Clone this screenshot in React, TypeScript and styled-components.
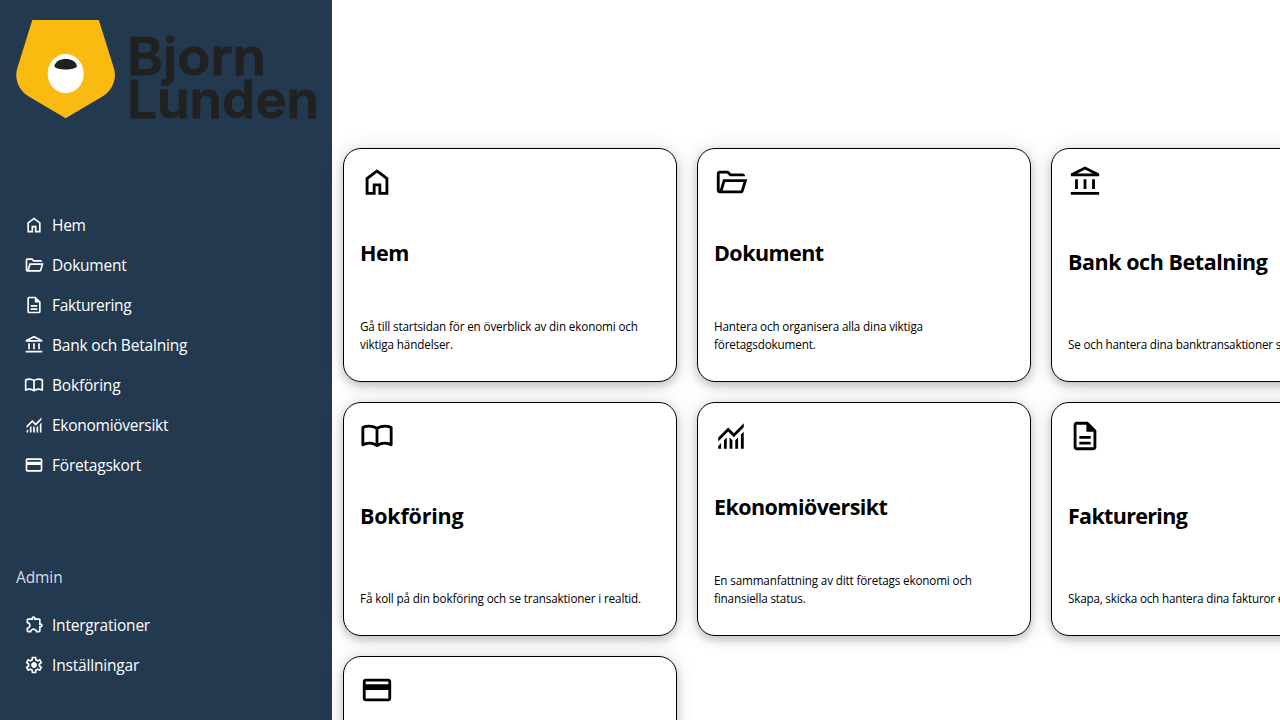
import React from 'react';
import styled, { createGlobalStyle } from 'styled-components';

const icons = {
  home: 'M240-200h120v-240h240v240h120v-360L480-740 240-560v360Zm-80 80v-480l320-240 320 240v480H520v-240h-80v240H160Zm320-350Z',
  folder:
    'M160-160q-33 0-56.5-23.5T80-240v-480q0-33 23.5-56.5T160-800h240l80 80h320q33 0 56.5 23.5T880-640H447l-80-80H160v480l96-320h684L837-217q-8 26-29.5 41.5T760-160H160Zm84-80h516l72-240H316l-72 240Zm0 0 72-240-72 240Zm-84-400v-80 80Z',
  document:
    'M320-240h320v-80H320v80Zm0-160h320v-80H320v80ZM240-80q-33 0-56.5-23.5T160-160v-640q0-33 23.5-56.5T240-880h320l240 240v480q0 33-23.5 56.5T720-80H240Zm280-520v-200H240v640h480v-440H520ZM240-800v200-200 640-640Z',
  bank: 'M200-280v-280h80v280h-80Zm240 0v-280h80v280h-80ZM80-120v-80h800v80H80Zm600-160v-280h80v280h-80ZM80-640v-80l400-200 400 200v80H80Zm178-80h444L480-830 258-720Z',
  book: 'M260-320q47 0 91.5 10.5T440-278v-394q-41-24-87-36t-93-12q-36 0-71.5 7T120-692v396q35-12 69.5-18t70.5-6Zm260 42q44-21 88.5-31.5T700-320q36 0 70.5 6t69.5 18v-396q-33-14-68.5-21t-71.5-7q-47 0-93 12t-87 36v394Zm-40 118q-48-38-104-59t-116-21q-42 0-82.5 11T100-198q-21 11-40.5-1T40-234v-482q0-11 5.5-21T62-752q46-24 96-36t102-12q58 0 113.5 15T480-740q51-30 106.5-45T700-800q52 0 102 12t96 36q11 5 16.5 15t5.5 21v482q0 23-19.5 35t-40.5 1q-37-20-77.5-31T700-240q-60 0-116 21t-104 59Z',
  chart:
    'M120-120v-80l80-80v160h-80Zm160 0v-240l80-80v320h-80Zm160 0v-320l80 81v239h-80Zm160 0v-239l80-80v319h-80Zm160 0v-400l80-80v480h-80ZM120-327v-113l280-280 160 160 280-280v113L560-447 400-607 120-327Z',
  card: 'M880-720v480q0 33-23.5 56.5T800-160H160q-33 0-56.5-23.5T80-240v-480q0-33 23.5-56.5T160-800h640q33 0 56.5 23.5T880-720Zm-720 80h640v-80H160v80Zm0 160v240h640v-240H160Zm0 240v-480 480Z',
  puzzle:
    'M352-120H200q-33 0-56.5-23.5T120-200v-152q48 0 84-30.5t36-77.5q0-47-36-77.5T120-568v-152q0-33 23.5-56.5T200-800h160q0-42 29-71t71-29q42 0 71 29t29 71h160q33 0 56.5 23.5T800-720v160q42 0 71 29t29 71q0 42-29 71t-71 29v160q0 33-23.5 56.5T720-120H568q0-50-31.5-85T460-240q-45 0-76.5 35T352-120Zm-152-80h85q24-66 77-93t98-27q45 0 98 27t77 93h85v-240h80q8 0 14-6t6-14q0-8-6-14t-14-6h-80v-240H480v-80q0-8-6-14t-14-6q-8 0-14 6t-6 14v80H200v88q54 20 87 67t33 105q0 57-33 104t-87 68v88Z',
  gear: 'm370-80-16-128q-13-5-24.5-12T307-235l-119 50L78-375l103-78q-1-7-1-13.5v-27q0-6.5 1-13.5L78-585l110-190 119 50q11-8 23-15t24-12l16-128h220l16 128q13 5 24.5 12t22.5 15l119-50 110 190-103 78q1 7 1 13.5v27q0 6.5-2 13.5l103 78-110 190-118-50q-11 8-23 15t-24 12L590-80H370Zm70-80h79l14-106q31-8 57.5-23.5T639-327l99 41 39-68-86-65q5-14 7-29.5t2-31.5q0-16-2-31.5t-7-29.5l86-65-39-68-99 42q-22-23-48.5-38.5T533-694l-13-106h-79l-14 106q-31 8-57.5 23.5T321-633l-99-41-39 68 86 64q-5 15-7 30t-2 32q0 16 2 31t7 30l-86 65 39 68 99-42q22 23 48.5 38.5T427-266l13 106Zm42-180q58 0 99-41t41-99q0-58-41-99t-99-41q-59 0-99.5 41T342-480q0 58 40.5 99t99.5 41Z',
};

type IconName = keyof typeof icons;

const mainLinks: { icon: IconName; label: string; track: number }[] = [
  { icon: 'home', label: 'Hem', track: -0.3 },
  { icon: 'folder', label: 'Dokument', track: -0.22 },
  { icon: 'document', label: 'Fakturering', track: -0.34 },
  { icon: 'bank', label: 'Bank och Betalning', track: -0.19 },
  { icon: 'book', label: 'Bokföring', track: -0.2 },
  { icon: 'chart', label: 'Ekonomiöversikt', track: -0.27 },
  { icon: 'card', label: 'Företagskort', track: -0.21 },
];

const adminLinks: typeof mainLinks = [
  { icon: 'puzzle', label: 'Intergrationer', track: -0.22 },
  { icon: 'gear', label: 'Inställningar', track: -0.18 },
];

const cards: { icon: IconName; title: string; text: string; track: number; textTrack: number }[] = [
  { icon: 'home', title: 'Hem', text: 'Gå till startsidan för en överblick av din ekonomi och viktiga händelser.', track: -0.5, textTrack: -0.14 },
  { icon: 'folder', title: 'Dokument', text: 'Hantera och organisera alla dina viktiga företagsdokument.', track: -0.55, textTrack: -0.15 },
  { icon: 'bank', title: 'Bank och Betalning', text: 'Se och hantera dina banktransaktioner smidigt.', track: -0.45, textTrack: -0.19 },
  { icon: 'book', title: 'Bokföring', text: 'Få koll på din bokföring och se transaktioner i realtid.', track: -0.22, textTrack: -0.14 },
  { icon: 'chart', title: 'Ekonomiöversikt', text: 'En sammanfattning av ditt företags ekonomi och finansiella status.', track: -0.56, textTrack: -0.15 },
  { icon: 'document', title: 'Fakturering', text: 'Skapa, skicka och hantera dina fakturor enkelt.', track: -0.68, textTrack: -0.2 },
  { icon: 'card', title: 'Företagskort', text: 'Hantera dina företagskort och utgifter.', track: -0.4, textTrack: -0.15 },
];

const GlobalStyle = createGlobalStyle`
  * { box-sizing: border-box; }
  body {
    margin: 0;
    overflow: hidden;
    background: #fff;
    font-family: 'Open Sans', 'Noto Sans', sans-serif;
  }
`;

const Page = styled.div`
  display: flex;
  height: 100vh;
  overflow: hidden;
`;

const Sidebar = styled.aside`
  flex: 0 0 332px;
  display: flex;
  flex-direction: column;
  padding: 20px 16px;
  background: #233950;
`;

const Logo = styled.svg`
  display: block;
  flex: none;
  width: 300px;
  height: 104px;
  overflow: visible;
`;

const NavList = styled.ul<{ $top: number }>`
  list-style: none;
  margin: ${(p) => p.$top}px 0 0;
  padding: 0;
`;

const NavItem = styled.li<{ $track: number }>`
  display: flex;
  align-items: center;
  gap: 8px;
  height: 40px;
  padding: 0 8px;
  color: #fff;
  font-size: 15.5px;
  line-height: 24px;
  letter-spacing: ${(p) => p.$track}px;
`;

const SectionLabel = styled.div`
  margin-top: 80px;
  font-size: 15.5px;
  line-height: 24px;
  letter-spacing: -0.1px;
  color: #d9dde1;
`;

const Glyph = styled.svg<{ $size: number }>`
  display: block;
  flex: none;
  width: ${(p) => p.$size}px;
  height: ${(p) => p.$size}px;
  fill: currentColor;
`;

const Main = styled.main`
  flex: 1;
  min-width: 0;
  padding: 148px 0 0 11px;
`;

const CardGrid = styled.div`
  display: grid;
  grid-template-columns: repeat(3, 334px);
  grid-auto-rows: 234px;
  gap: 20px;
`;

const Card = styled.article`
  display: flex;
  flex-direction: column;
  justify-content: space-between;
  padding: 16px;
  border: 1px solid #000;
  border-radius: 18px;
  background: #fff;
  color: #000;
  box-shadow: 0 4px 8px rgba(0, 0, 0, 0.2), 0 0 20px rgba(0, 0, 0, 0.12);
`;

const CardTitle = styled.h2<{ $track: number }>`
  margin: 0;
  padding-top: 2px;
  font-size: 21.5px;
  line-height: 30px;
  font-weight: 700;
  letter-spacing: ${(p) => p.$track}px;
`;

const CardText = styled.p<{ $track: number }>`
  margin: 12px 0;
  font-size: 11.7px;
  line-height: 18px;
  letter-spacing: ${(p) => p.$track}px;
`;

const Wordmark = styled.text`
  font-family: Inter, sans-serif;
  font-size: 51.5px;
  font-weight: 600;
  fill: #212121;
  stroke: #212121;
  stroke-width: 0.8px;
`;

const Icon = ({ name, size }: { name: IconName; size: number }) => (
  <Glyph $size={size} viewBox="0 -960 960 960" aria-hidden="true">
    <path d={icons[name]} />
  </Glyph>
);

const Nav = ({ links, top }: { links: typeof mainLinks; top: number }) => (
  <NavList $top={top}>
    {links.map((link) => (
      <NavItem key={link.label} $track={link.track}>
        <Icon name={link.icon} size={20} />
        {link.label}
      </NavItem>
    ))}
  </NavList>
);

export default function App() {
  return (
    <Page>
      <GlobalStyle />
      <Sidebar>
        <Logo viewBox="0 0 300 104" role="img" aria-label="Bjorn Lunden">
          <path
            d="M16.3 0H82.8L98 48.5C101 58 96.9 70 87.2 76L49.6 98.2 12 76C2.3 70-1.8 58 1.2 48.5Z"
            fill="#fbba10"
          />
          <ellipse cx="49.7" cy="53.7" rx="18" ry="19.6" fill="#fff" />
          <path d="M38.3 46C39.5 41.5 44 39 49.7 39S60 41.5 61 46C60 48.6 55 49.5 49.7 49.5S39.3 48.6 38.3 46Z" fill="#212121" />
          <Wordmark x="111" y="54.8" textLength="139" lengthAdjust="spacingAndGlyphs">Bjorn</Wordmark>
          <Wordmark x="111" y="98" textLength="192" lengthAdjust="spacingAndGlyphs">Lunden</Wordmark>
        </Logo>
        <Nav links={mainLinks} top={81} />
        <SectionLabel>Admin</SectionLabel>
        <Nav links={adminLinks} top={16} />
      </Sidebar>
      <Main>
        <CardGrid>
          {cards.map((card) => (
            <Card key={card.title}>
              <Icon name={card.icon} size={34} />
              <CardTitle $track={card.track}>{card.title}</CardTitle>
              <CardText $track={card.textTrack}>{card.text}</CardText>
            </Card>
          ))}
        </CardGrid>
      </Main>
    </Page>
  );
}
